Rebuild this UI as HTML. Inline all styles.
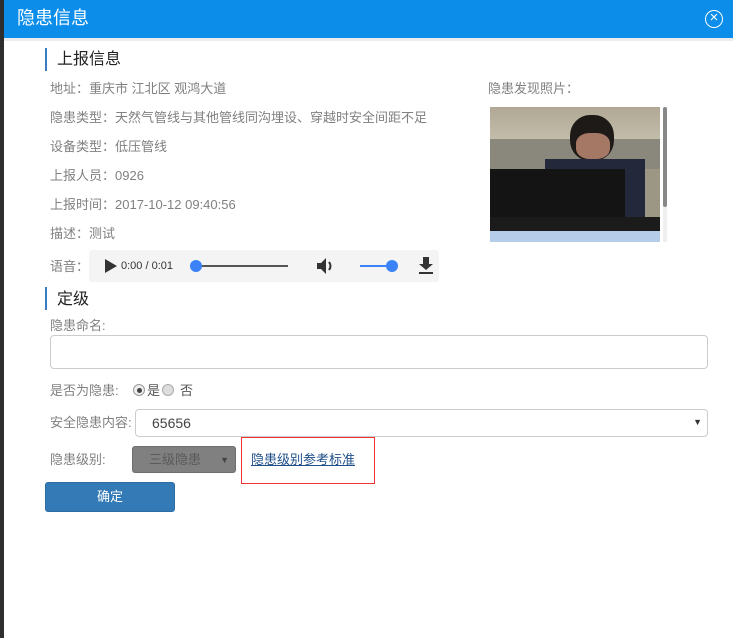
<!DOCTYPE html>
<html><head><meta charset="utf-8">
<style>
*{margin:0;padding:0;box-sizing:border-box}
body{width:733px;height:638px;overflow:hidden;background:#2e2e2e;font-family:"Liberation Sans","Noto Sans CJK SC",sans-serif;position:relative}
.modal{position:absolute;left:4px;top:0;width:729px;height:638px;background:#fff}
.hdr{position:absolute;left:0;top:0;width:729px;height:38px;background:#0b8de9;color:#fff;font-size:18px;line-height:36px;padding-left:13px}
.close{position:absolute;right:10px;top:10px;width:18px;height:18px;border:1.5px solid #fff;border-radius:50%;color:#fff;font-size:15px;line-height:14px;text-align:center}
.strip{position:absolute;left:0;top:38px;width:729px;height:3px;background:#ececec}
.t{position:absolute;font-size:13px;color:#808080;white-space:nowrap;line-height:17px}
.sec{position:absolute;left:41px;width:2px;height:23px;background:#3a7cc4}
.st{position:absolute;left:53px;font-size:16px;color:#222;line-height:22px}
.input{position:absolute;border:1px solid #ccc;border-radius:4px;background:#fff}
</style></head><body>
<div class="modal">
<div class="hdr">隐患信息<div class="close">×</div></div>
<div class="strip"></div>
<div class="sec" style="top:48px"></div><div class="st" style="top:49px">上报信息</div>
<div class="t" style="left:46px;top:80px">地址：重庆市 江北区 观鸿大道</div>
<div class="t" style="left:46px;top:109px">隐患类型：天然气管线与其他管线同沟埋设、穿越时安全间距不足</div>
<div class="t" style="left:46px;top:138px">设备类型：低压管线</div>
<div class="t" style="left:46px;top:167px">上报人员：0926</div>
<div class="t" style="left:46px;top:196px">上报时间：2017-10-12 09:40:56</div>
<div class="t" style="left:46px;top:225px">描述：测试</div>
<div class="t" style="left:46px;top:258px">语音：</div>
<div style="position:absolute;left:85px;top:250px;width:350px;height:32px;background:#f4f4f4;border-radius:3px">
<svg style="position:absolute;left:16px;top:9px" width="12" height="14"><path d="M0 0L12 7L0 14Z" fill="#333"/></svg>
<span style="position:absolute;left:32px;top:9px;font-size:11px;line-height:14px;color:#333">0:00 / 0:01</span>
<div style="position:absolute;left:107px;top:15px;width:92px;height:2px;background:#555"></div>
<div style="position:absolute;left:101px;top:10px;width:12px;height:12px;border-radius:50%;background:#3b82f6"></div>
<svg style="position:absolute;left:227px;top:7px" width="20" height="18"><path d="M1 6H5L10 1V17L5 12H1Z" fill="#333"/><path d="M13 5Q16 9 13 13" stroke="#333" stroke-width="2" fill="none"/></svg>
<div style="position:absolute;left:271px;top:15px;width:30px;height:2px;background:#3b82f6"></div>
<div style="position:absolute;left:297px;top:10px;width:12px;height:12px;border-radius:50%;background:#3b82f6"></div>
<svg style="position:absolute;left:330px;top:7px" width="14" height="17"><path d="M4 0H10V7H14L7 13L0 7H4Z" fill="#333"/><rect x="0" y="15" width="14" height="2" fill="#333"/></svg>
</div>
<div class="t" style="left:484px;top:80px">隐患发现照片：</div>
<div style="position:absolute;left:486px;top:107px;width:170px;height:135px;overflow:hidden;background:#9c9684">
<div style="position:absolute;left:0;top:0;width:170px;height:32px;background:linear-gradient(#b0a894,#c2bcaa)"></div>
<div style="position:absolute;left:0;top:32px;width:170px;height:30px;background:#8a877d"></div>
<div style="position:absolute;left:80px;top:8px;width:44px;height:46px;border-radius:45%;background:#1e1a18"></div>
<div style="position:absolute;left:86px;top:26px;width:34px;height:26px;border-radius:40%;background:#a47864"></div>
<div style="position:absolute;left:55px;top:52px;width:100px;height:60px;background:#23283a"></div>
<div style="position:absolute;left:0;top:62px;width:135px;height:50px;background:#141414"></div>
<div style="position:absolute;left:0;top:110px;width:170px;height:14px;background:#1b1b1b"></div>
<div style="position:absolute;left:0;top:124px;width:170px;height:11px;background:#b5cde8"></div>
</div>
<div style="position:absolute;left:659px;top:107px;width:4px;height:135px;background:#eee"><div style="height:100px;background:#888;border-radius:2px"></div></div>
<div class="sec" style="top:287px"></div><div class="st" style="top:289px">定级</div>
<div class="t" style="left:46px;top:317px">隐患命名:</div>
<div class="input" style="left:46px;top:335px;width:658px;height:34px"></div>
<div class="t" style="left:46px;top:382px">是否为隐患:</div>
<div style="position:absolute;left:129px;top:384px;width:12px;height:12px;border-radius:50%;border:1px solid #999;background:#eee"><div style="margin:2.5px;width:5px;height:5px;border-radius:50%;background:#444"></div></div>
<div class="t" style="left:143px;top:382px;color:#555">是</div>
<div style="position:absolute;left:158px;top:384px;width:12px;height:12px;border-radius:50%;border:1px solid #aaa;background:#ddd"></div>
<div class="t" style="left:176px;top:382px;color:#555">否</div>
<div class="t" style="left:46px;top:414px">安全隐患内容:</div>
<div class="input" style="left:131px;top:409px;width:573px;height:28px"><span style="position:absolute;left:16px;top:5px;font-size:14px;line-height:16px;color:#444">65656</span><span style="position:absolute;right:5px;top:7px;font-size:9px;line-height:10px;color:#333">▼</span></div>
<div class="t" style="left:46px;top:451px">隐患级别:</div>
<div style="position:absolute;left:128px;top:446px;width:104px;height:27px;background:#808080;border:1px solid #6e6e6e;border-radius:3px"><span style="position:absolute;left:16px;top:4px;font-size:13px;line-height:17px;color:#5a5a5a">三级隐患</span><span style="position:absolute;right:6px;top:8px;font-size:9px;line-height:10px;color:#444">▼</span></div>
<div style="position:absolute;left:237px;top:437px;width:134px;height:47px;border:1px solid #e33"></div>
<div class="t" style="left:247px;top:451px;color:#1e4f88;text-decoration:underline">隐患级别参考标准</div>
<div style="position:absolute;left:41px;top:482px;width:130px;height:30px;background:#337ab7;border:1px solid #2e6da4;border-radius:3px;color:#fff;font-size:13px;text-align:center;line-height:28px">确定</div>
</div>
</body></html>
